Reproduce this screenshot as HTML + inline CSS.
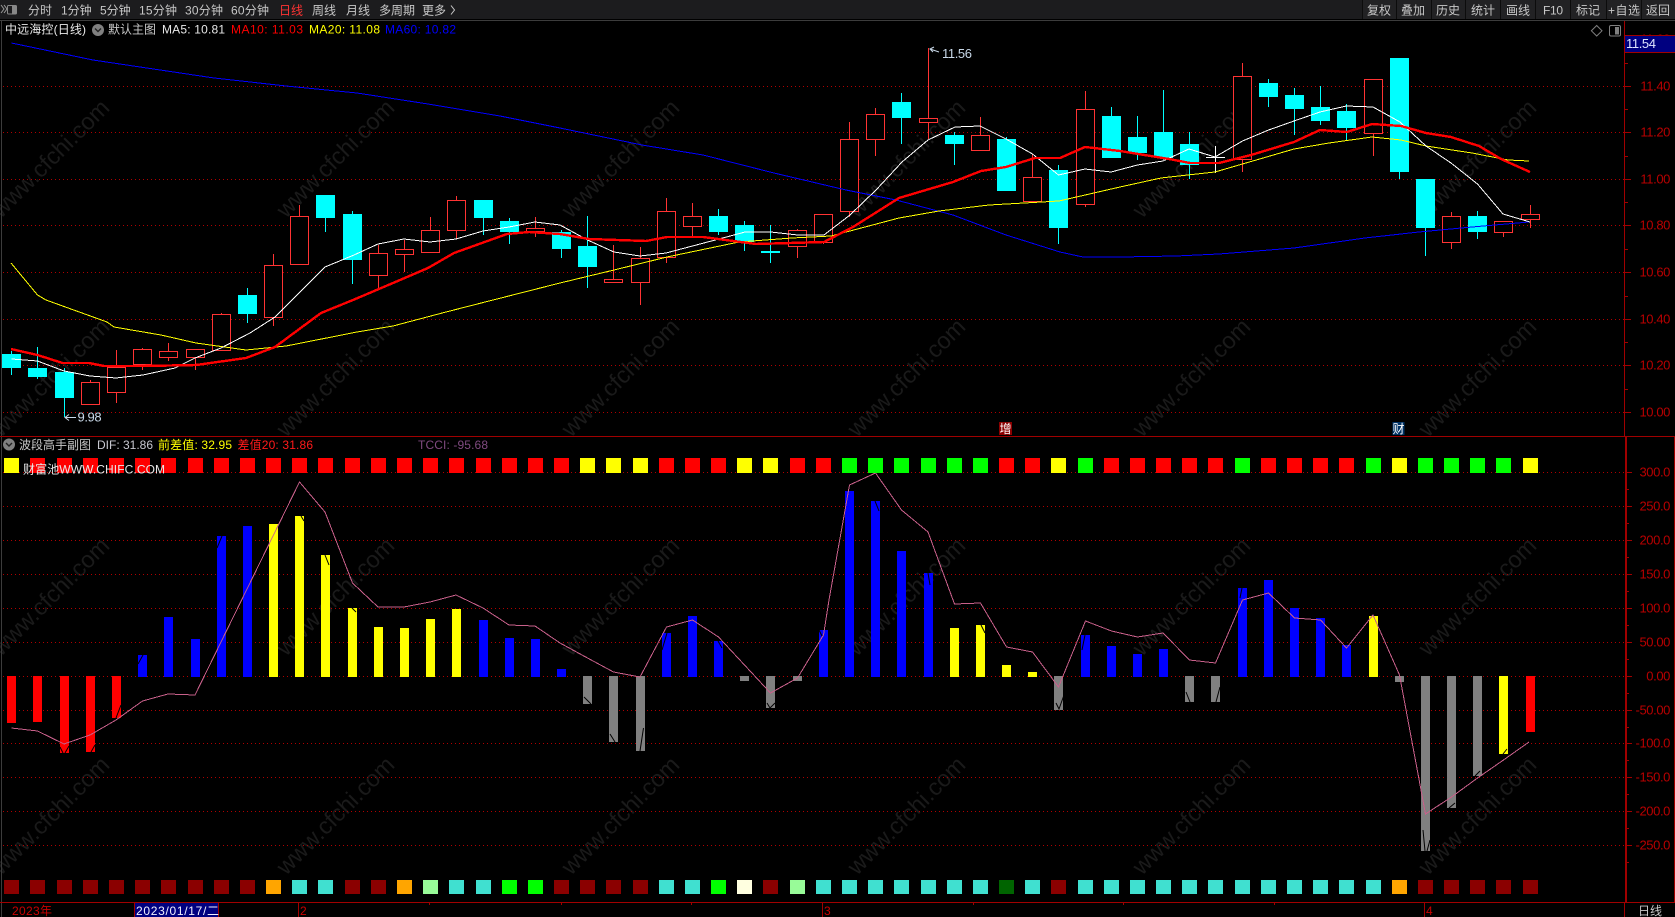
<!DOCTYPE html>
<html lang="zh">
<head>
<meta charset="utf-8">
<title>中远海控 (日线)</title>
<style>
html,body{margin:0;padding:0;background:#000;width:1675px;height:917px;overflow:hidden}
svg{display:block;position:absolute;left:0;top:0}
text{font-family:"Liberation Sans","Noto Sans CJK SC",sans-serif;font-size:12px;white-space:pre}
.wm text{font-size:23.5px;fill:#1a1a1a}
.tb text{fill:#c8c8c8}
.ax text{font-size:13px;fill:#b80000;text-anchor:end;letter-spacing:-.4px}
.grid{stroke:#b00000;stroke-width:1;stroke-dasharray:1 3;fill:none;shape-rendering:crispEdges}
.crisp{shape-rendering:crispEdges}
</style>
</head>
<body>
<svg width="1675" height="917" viewBox="0 0 1675 917" xmlns="http://www.w3.org/2000/svg">
<rect width="1675" height="917" fill="#000"/>

<!-- watermark -->
<g class="wm">
<text x="1" y="219" transform="rotate(-45 1 219)">www.cfchi.com</text>
<text x="286" y="219" transform="rotate(-45 286 219)">www.cfchi.com</text>
<text x="571" y="219" transform="rotate(-45 571 219)">www.cfchi.com</text>
<text x="857" y="219" transform="rotate(-45 857 219)">www.cfchi.com</text>
<text x="1142" y="219" transform="rotate(-45 1142 219)">www.cfchi.com</text>
<text x="1428" y="219" transform="rotate(-45 1428 219)">www.cfchi.com</text>
<text x="1" y="438" transform="rotate(-45 1 438)">www.cfchi.com</text>
<text x="286" y="438" transform="rotate(-45 286 438)">www.cfchi.com</text>
<text x="571" y="438" transform="rotate(-45 571 438)">www.cfchi.com</text>
<text x="857" y="438" transform="rotate(-45 857 438)">www.cfchi.com</text>
<text x="1142" y="438" transform="rotate(-45 1142 438)">www.cfchi.com</text>
<text x="1428" y="438" transform="rotate(-45 1428 438)">www.cfchi.com</text>
<text x="1" y="657" transform="rotate(-45 1 657)">www.cfchi.com</text>
<text x="286" y="657" transform="rotate(-45 286 657)">www.cfchi.com</text>
<text x="571" y="657" transform="rotate(-45 571 657)">www.cfchi.com</text>
<text x="857" y="657" transform="rotate(-45 857 657)">www.cfchi.com</text>
<text x="1142" y="657" transform="rotate(-45 1142 657)">www.cfchi.com</text>
<text x="1428" y="657" transform="rotate(-45 1428 657)">www.cfchi.com</text>
<text x="1" y="876" transform="rotate(-45 1 876)">www.cfchi.com</text>
<text x="286" y="876" transform="rotate(-45 286 876)">www.cfchi.com</text>
<text x="571" y="876" transform="rotate(-45 571 876)">www.cfchi.com</text>
<text x="857" y="876" transform="rotate(-45 857 876)">www.cfchi.com</text>
<text x="1142" y="876" transform="rotate(-45 1142 876)">www.cfchi.com</text>
<text x="1428" y="876" transform="rotate(-45 1428 876)">www.cfchi.com</text>
</g>

<!-- toolbar -->
<g class="tb">
<rect x="0" y="0" width="1675" height="19" fill="#1c1c1e"/>
<rect x="1362" y="0" width="313" height="19" fill="#222224"/>
<rect x="0" y="20" width="1675" height="1" fill="#3c3c3c"/>
<path d="M1362.5 0V19M1396.5 0V19M1431.5 0V19M1465.5 0V19M1500.5 0V19M1535.5 0V19M1570.5 0V19M1606.5 0V19M1641.5 0V19" stroke="#0c0c0c" class="crisp"/>
<path d="M1 5L4 9L1 13M4 5L7 9L4 13" stroke="#999" fill="none"/>
<rect x="7.5" y="5.5" width="9" height="8.5" rx="1" fill="#1c1c1e" stroke="#888"/>
<rect x="12" y="6" width="4" height="7.5" fill="#888"/>
<text x="28" y="14.5">分时</text>
<text x="61" y="14.5">1分钟</text>
<text x="100" y="14.5">5分钟</text>
<text x="139" y="14.5" textLength="38">15分钟</text>
<text x="185" y="14.5" textLength="38">30分钟</text>
<text x="231" y="14.5" textLength="38">60分钟</text>
<text x="279" y="14.5" style="fill:#ff3333">日线</text>
<text x="312" y="14.5">周线</text>
<text x="346" y="14.5">月线</text>
<text x="379" y="14.5">多周期</text>
<text x="422" y="14.5">更多</text>
<path d="M451 5.5L454.5 10L451 14.5" stroke="#c8c8c8" fill="none"/>
<text x="1367" y="14.5">复权</text>
<text x="1401" y="14.5">叠加</text>
<text x="1436" y="14.5">历史</text>
<text x="1471" y="14.5">统计</text>
<text x="1506" y="14.5">画线</text>
<text x="1543" y="14.5" textLength="20">F10</text>
<text x="1576" y="14.5">标记</text>
<text x="1608" y="14.5" textLength="32">+自选</text>
<text x="1646" y="14.5">返回</text>
</g>

<!-- left border -->
<path d="M1.5 21V917" stroke="#3c3c3c" class="crisp"/>

<!-- grid -->
<path class="grid" d="M3 86.5H1625M3 132.5H1625M3 179.5H1625M3 225.5H1625M3 272.5H1625M3 319.5H1625M3 365.5H1625M3 412.5H1625M3 472.5H1625M3 506.5H1625M3 540.5H1625M3 574.5H1625M3 608.5H1625M3 642.5H1625M3 676.5H1625M3 710.5H1625M3 743.5H1625M3 777.5H1625M3 811.5H1625M3 845.5H1625"/>

<!-- candles: cyan -->
<g class="crisp">
<path stroke="#00ffff" fill="none" d="M11.5 351V375M37.5 347V379M64.5 368V417M247.5 288V323M325.5 195V232M352.5 211V284M483.5 200V235M509.5 218V244M561.5 230V258M587.5 216V288M718.5 209V235M744.5 221V251M770.5 225V263M901.5 93V144M954.5 132V165M1006.5 137V191M1058.5 165V244M1111.5 107V158M1137.5 116V160M1163.5 90V160M1189.5 132V179M1268.5 79V107M1294.5 88V135M1320.5 86V125M1346.5 104V141M1399.5 58V179M1425.5 179V256M1477.5 211V239"/>
<path fill="#00ffff" d="M2 354h19v14h-19zM28 368h19v9h-19zM55 372h19v26h-19zM238 295h19v19h-19zM316 195h19v23h-19zM343 214h19v46h-19zM474 200h19v18h-19zM500 221h19v11h-19zM552 232h19v17h-19zM578 246h19v21h-19zM709 216h19v16h-19zM735 225h19v17h-19zM761 251h19v2h-19zM892 102h19v16h-19zM945 135h19v9h-19zM997 139h19v52h-19zM1049 170h19v58h-19zM1102 116h19v42h-19zM1128 137h19v16h-19zM1154 132h19v26h-19zM1180 144h19v21h-19zM1259 83h19v14h-19zM1285 95h19v14h-19zM1311 107h19v14h-19zM1337 111h19v17h-19zM1390 58h19v114h-19zM1416 179h19v49h-19zM1468 216h19v16h-19z"/>
<!-- candles: red -->
<path stroke="#ff3333" fill="none" d="M90.5 380V404M116.5 350V403M142.5 348V370M168.5 343V361M195.5 349V370M221.5 313V351M273.5 254V326M299.5 205V264M378.5 245V288M404.5 240V272M430.5 217V253M456.5 196V239M535.5 217V237M613.5 245V282M640.5 247V305M666.5 198V263M692.5 203V236M797.5 229V258M823.5 214V244M849.5 122V217M875.5 108V156M928.5 48V139M980.5 117V150M1032.5 154V201M1085.5 91V207M1242.5 63V172M1373.5 79V156M1451.5 212V249M1503.5 221V237M1530.5 205V228"/>
<g fill="#000" stroke="#ff3333">
<rect x="81.5" y="382.5" width="18" height="22"/><rect x="107.5" y="367.5" width="18" height="25"/><rect x="133.5" y="349.5" width="18" height="15"/><rect x="159.5" y="351.5" width="18" height="6"/><rect x="186.5" y="349.5" width="18" height="8"/><rect x="212.5" y="314.5" width="18" height="36"/><rect x="264.5" y="265.5" width="18" height="52"/><rect x="290.5" y="216.5" width="18" height="48"/><rect x="369.5" y="253.5" width="18" height="22"/><rect x="395.5" y="249.5" width="18" height="5"/><rect x="421.5" y="230.5" width="18" height="22"/><rect x="447.5" y="200.5" width="18" height="30"/><rect x="526.5" y="228.5" width="18" height="3"/><rect x="604.5" y="279.5" width="18" height="3"/><rect x="631.5" y="258.5" width="18" height="24"/><rect x="657.5" y="211.5" width="18" height="46"/><rect x="683.5" y="216.5" width="18" height="10"/><rect x="788.5" y="230.5" width="18" height="16"/><rect x="814.5" y="214.5" width="18" height="28"/><rect x="840.5" y="139.5" width="18" height="72"/><rect x="866.5" y="114.5" width="18" height="25"/><rect x="919.5" y="118.5" width="18" height="4"/><rect x="971.5" y="135.5" width="18" height="15"/><rect x="1023.5" y="177.5" width="18" height="24"/><rect x="1076.5" y="109.5" width="18" height="95"/><rect x="1233.5" y="76.5" width="18" height="83"/><rect x="1364.5" y="79.5" width="18" height="54"/><rect x="1442.5" y="216.5" width="18" height="26"/><rect x="1494.5" y="221.5" width="18" height="11"/><rect x="1521.5" y="214.5" width="18" height="5"/>
</g>
<path stroke="#ffffff" fill="none" d="M1215.5 146V173M1206 157.5H1225"/>
</g>

<!-- MA lines -->
<polyline class="crisp" fill="none" stroke="#0000ff" stroke-width="1" points="11.4,43 93,60 214,78 286,86 357,93 428,104 500,116 560,128 642,145 703,155 774,173 846,190 896,200 953,215 1006,235 1060,252 1083,257 1120,257 1176,256 1219,254 1294,248 1365,238 1419,232 1472,227 1529,222"/>
<polyline class="crisp" fill="none" stroke="#ffff00" stroke-width="1" points="11,263 37.5,295 46,300 107,322 114,327 161,335 196,343 246,350 286,346 357,332 393,326 446,312 493,300 560,283 614,270 667,257 739,242 792,238 831,236 899,218 939,211 989,205 1059,201 1120,187 1161,178 1215,172 1294,149 1329,143 1372,137 1401,140 1426,146 1472,153 1508,160 1529,161"/>
<polyline class="crisp" fill="none" stroke="#ffffff" stroke-width="1" points="11.5,359 37.5,361 64,371 90,376 116,378 143,375 175,368 195,358 221,348 250,333 275,317 292,300 325,267 354,255 378,244 404,239 430,242 456,239 483,231 509,227 535,222 560,225 587.5,240 614,252 640,256 666,253 692.5,246 719,239 745,232 771,232 797.5,235 824,235 850,215 876,190 902,162 928,140 955,127 980,126 1006,139 1032.5,154 1058.5,175 1085,169 1111,172 1137.5,165 1163,161 1189,149 1215,157 1242.5,141 1268.6,130 1294,121 1320,112 1346.4,106 1373,107 1400,122 1426,146 1451,163 1477.5,184 1503,214 1530,222"/>
<polyline class="crisp" fill="none" stroke="#ff0000" stroke-width="2.4" points="11,349 37.5,355 62.5,363 89,363 104,366 143,366 196,365 246,358 275,347 321,313 353,300 393,283 428,268 454,253 507,234 529,232 560,234 589,239 646,241 667,237 703,237 756,244 824,242 853,227 899,198 953,182 981,171 1006,167 1035,158 1060,158 1085,147 1120,151 1169,159 1190,163 1219,163 1251,155 1294,142 1320,130 1347,132 1372,124 1401,126 1426,133 1451,137 1479,146 1501,159 1530,172"/>

<!-- price markers -->
<path d="M939 52L930 49M934 47L930 49L933 52" stroke="#c8d8e8" fill="none"/>
<text x="942" y="58" style="font-size:13px;fill:#c8d8e8;letter-spacing:-.4px">11.56</text>
<path d="M76 417.5H65M69 414.5L65 417.5L69 420.5" stroke="#c8d8e8" fill="none"/>
<text x="77.5" y="421.5" style="font-size:13px;fill:#c8d8e8;letter-spacing:-.4px">9.98</text>

<!-- badges -->
<rect x="999" y="422" width="13" height="13" fill="#8b0000"/>
<text x="999.5" y="433" style="fill:#fff">增</text>
<rect x="1392.5" y="422" width="12" height="13" fill="#003366"/>
<text x="1392.5" y="433" style="fill:#fff">财</text>

<!-- top info -->
<text x="5" y="33.5" textLength="81" style="fill:#e8e8e8">中远海控(日线)</text>
<circle cx="98" cy="30" r="6" fill="#808080"/>
<path d="M95 28.5L98 31.5L101 28.5" stroke="#222" stroke-width="1.4" fill="none"/>
<text x="108" y="33.5" style="fill:#c8c8c8">默认主图</text>
<text x="162" y="33.5" textLength="63" style="fill:#e8e8e8">MA5: 10.81</text>
<text x="231" y="33.5" textLength="72" style="fill:#ff0000">MA10: 11.03</text>
<text x="309" y="33.5" textLength="71" style="fill:#ffff00">MA20: 11.08</text>
<text x="385" y="33.5" textLength="71" style="fill:#0000ff">MA60: 10.82</text>

<!-- diamond + panel icon -->
<path d="M1596.7 25.5L1602 30.8L1596.7 36L1591.4 30.8Z" stroke="#808080" fill="none"/>
<rect x="1609.5" y="25.5" width="11" height="10.5" rx="1.5" stroke="#808080" fill="none"/>
<rect x="1615" y="27" width="4" height="7.5" fill="#808080"/>

<!-- separators + axis -->
<g class="crisp">
<rect x="0" y="436" width="1675" height="1" fill="#a00000"/>
<rect x="0" y="902" width="1675" height="1" fill="#a00000"/>
<rect x="1624" y="21" width="1" height="415" fill="#a00000"/>
<rect x="1625" y="436" width="2" height="466" fill="#a00000"/>
<rect x="1674" y="436" width="1" height="466" fill="#a00000"/>
<rect x="1624" y="902" width="1" height="15" fill="#a00000"/>
<path stroke="#a00000" fill="none" d="M1625 86.5h6M1625 132.5h6M1625 179.5h6M1625 225.5h6M1625 272.5h6M1625 319.5h6M1625 365.5h6M1625 412.5h6M1627 472.5h5M1627 506.5h5M1627 540.5h5M1627 574.5h5M1627 608.5h5M1627 642.5h5M1627 676.5h5M1627 710.5h5M1627 743.5h5M1627 777.5h5M1627 811.5h5M1627 845.5h5M1625 63.5h3M1625 109.5h3M1625 156.5h3M1625 202.5h3M1625 249.5h3M1625 296.5h3M1625 342.5h3M1625 389.5h3M1627 489.5h2M1627 523.5h2M1627 557.5h2M1627 591.5h2M1627 625.5h2M1627 659.5h2M1627 693.5h2M1627 727.5h2M1627 760.5h2M1627 794.5h2M1627 828.5h2M1627 862.5h2"/>
</g>
<g class="ax">
<text x="1670" y="43.5">11.60</text>
<text x="1670" y="90.5">11.40</text>
<text x="1670" y="136.5">11.20</text>
<text x="1670" y="183.5">11.00</text>
<text x="1670" y="229.5">10.80</text>
<text x="1670" y="276.5">10.60</text>
<text x="1670" y="323.5">10.40</text>
<text x="1670" y="369.5">10.20</text>
<text x="1670" y="416.5">10.00</text>
<text x="1670" y="476.5">300.0</text>
<text x="1670" y="510.5">250.0</text>
<text x="1670" y="544.5">200.0</text>
<text x="1670" y="578.5">150.0</text>
<text x="1670" y="612.5">100.0</text>
<text x="1670" y="646.5">50.00</text>
<text x="1670" y="680.5">0.00</text>
<text x="1670" y="714.5">-50.00</text>
<text x="1670" y="747.5">-100.0</text>
<text x="1670" y="781.5">-150.0</text>
<text x="1670" y="815.5">-200.0</text>
<text x="1670" y="849.5">-250.0</text>
</g>
<rect x="1625" y="35" width="50" height="17" fill="#000080" class="crisp"/>
<path d="M1625 35.5H1675M1625 52.5H1675" stroke="#a00000" class="crisp"/>
<text x="1626" y="48" style="font-size:13px;fill:#dfe4ff;letter-spacing:-.4px">11.54</text>

<!-- lower header -->
<circle cx="9" cy="444.5" r="6" fill="#808080"/>
<path d="M6 443L9 446L12 443" stroke="#222" stroke-width="1.4" fill="none"/>
<text x="19" y="449" style="fill:#c8c8c8">波段高手副图</text>
<text x="97" y="449" textLength="56" style="fill:#c8c8d0">DIF: 31.86</text>
<text x="158" y="449" textLength="74" style="fill:#ffff00">前差值: 32.95</text>
<text x="237.5" y="449" textLength="75.5" style="fill:#ff1a1a">差值20: 31.86</text>
<text x="418" y="449" textLength="70" style="fill:#804a80">TCCI: -95.68</text>

<!-- histogram bars -->
<g fill="none" stroke-width="9" class="crisp">
<path stroke="#ff0000" d="M11.5 676V723M37.5 676V722M64.5 676V753M90.5 676V752M116.5 676V718M1530.5 676V732"/>
<path stroke="#0000ff" d="M142.5 655V677M168.5 617V677M195.5 639V677M221.5 536V677M247.5 526V677M483.5 620V677M509.5 638V677M535.5 639V677M561.5 669V677M666.5 633V677M692.5 616V677M718.5 641V677M823.5 630V677M849.5 491V677M875.5 501V677M901.5 551V677M928.5 573V677M1085.5 635V677M1111.5 646V677M1137.5 654V677M1163.5 649V677M1242.5 588V677M1268.5 580V677M1294.5 608V677M1320.5 618V677M1346.5 645V677"/>
<path stroke="#ffff00" d="M273.5 524V677M299.5 516V677M325.5 555V677M352.5 608V677M378.5 627V677M404.5 628V677M430.5 619V677M456.5 609V677M954.5 628V677M980.5 625V677M1006.5 665V677M1032.5 672V677M1373.5 616V677M1503.5 676V754"/>
<path stroke="#808080" d="M587.5 676V704M613.5 676V742M640.5 676V751M744.5 676V681M770.5 676V708M797.5 676V681M1058.5 676V710M1189.5 676V702M1215.5 676V702M1399.5 676V682M1425.5 676V851M1451.5 676V808M1477.5 676V776"/>
</g>
<!-- notches at bar ends -->
<path stroke="#000" fill="none" d="M1423 830L1425 851M1430 840L1427 851M643.5 728L640 751M767 703L770 708L775 703M1056 703L1059 709L1064 695M610 734L615 742M584 697L591 704M1186 692L1190 702M1220 687L1216 702M1455 803L1449 808M1480 771L1475 776M1507 749L1503 754M121 705L116 718M60 747L63 753M69 746L65 753M95 745L91 752M138 664L143 655M217 548L222 536M301 516L304 521M325 555L329 565M352 608L356 612M1242 588L1240 598M981 625L985 633M928 573L930 585M875 501L879 511M662 650L667 633M718 641L722 648M819 630L822 636M1085 635L1082 650"/>

<!-- pink line -->
<polyline class="crisp" fill="none" stroke="#c8608a" stroke-width="1" points="11.5,728 37.5,731 64,744 90,735 116,720 142.5,701 168,694 195,695 299.5,482 325,512 352.5,583 378,607 404,607 430,602 456,595 483,608 509,625 535,626 560,643 587.5,658 613.5,672 640,677 666.5,627 692.5,620 718.5,637 744.5,665 770.5,693 797.5,678 823.5,635 829,600 849.5,485 875.5,473 901.5,510 928,532 954.5,604 980.5,603 1006.5,647 1032.5,652 1058.5,687 1085.5,621 1111.5,631 1137.5,637 1163,633 1189.5,660 1215.5,663 1242.5,600 1268.5,593 1294.5,618 1320.5,620 1346.5,648 1373,615 1399.5,675 1425.5,814 1451.5,797 1477.5,778 1503.5,760 1529,742"/>

<!-- square rows -->
<g fill="none" class="crisp">
<g stroke-width="15">
<path stroke="#ffff00" d="M4 465.5h15M580 465.5h15M606 465.5h15M633 465.5h15M737 465.5h15M763 465.5h15M1051 465.5h15M1392 465.5h15M1523 465.5h15"/>
<path stroke="#00ff00" d="M842 465.5h15M868 465.5h15M894 465.5h15M921 465.5h15M947 465.5h15M973 465.5h15M1078 465.5h15M1235 465.5h15M1366 465.5h15M1418 465.5h15M1444 465.5h15M1470 465.5h15M1496 465.5h15"/>
<path stroke="#ff0000" d="M30 465.5h15M57 465.5h15M83 465.5h15M109 465.5h15M135 465.5h15M161 465.5h15M188 465.5h15M214 465.5h15M240 465.5h15M266 465.5h15M292 465.5h15M318 465.5h15M345 465.5h15M371 465.5h15M397 465.5h15M423 465.5h15M449 465.5h15M476 465.5h15M502 465.5h15M528 465.5h15M554 465.5h15M659 465.5h15M685 465.5h15M711 465.5h15M790 465.5h15M816 465.5h15M999 465.5h15M1025 465.5h15M1104 465.5h15M1130 465.5h15M1156 465.5h15M1182 465.5h15M1208 465.5h15M1261 465.5h15M1287 465.5h15M1313 465.5h15M1339 465.5h15"/>
</g>
<g stroke-width="14">
<path stroke="#8b0000" d="M4 887h15M30 887h15M57 887h15M83 887h15M109 887h15M135 887h15M161 887h15M188 887h15M214 887h15M240 887h15M345 887h15M371 887h15M554 887h15M580 887h15M606 887h15M633 887h15M763 887h15M1051 887h15M1418 887h15M1444 887h15M1470 887h15M1496 887h15M1523 887h15"/>
<path stroke="#ffa500" d="M266 887h15M397 887h15M1392 887h15"/>
<path stroke="#40e0d0" d="M292 887h15M318 887h15M449 887h15M476 887h15M659 887h15M685 887h15M816 887h15M842 887h15M868 887h15M894 887h15M921 887h15M947 887h15M973 887h15M1025 887h15M1078 887h15M1104 887h15M1130 887h15M1156 887h15M1182 887h15M1208 887h15M1235 887h15M1261 887h15M1287 887h15M1313 887h15M1339 887h15M1366 887h15"/>
<path stroke="#98fb98" d="M423 887h15M790 887h15"/>
<path stroke="#00ff00" d="M502 887h15M528 887h15M711 887h15"/>
<path stroke="#ffffe0" d="M737 887h15"/>
<path stroke="#006400" d="M999 887h15"/>
</g>
</g>

<text x="23" y="473.5" textLength="142" style="fill:#e8e8e8">财富池WWW.CHIFC.COM</text>

<!-- bottom axis -->
<g class="crisp">
<rect x="135" y="903" width="84" height="14" fill="#000080"/>
<path stroke="#a00000" fill="none" d="M134.5 903V917M218.5 903V917M298.5 903V917M822.5 903V917M1424.5 903V917M429.5 903V905M561.5 903V905M691.5 903V905M973.5 903V905M1123.5 903V905M1274.5 903V905"/>
</g>
<text x="12" y="915" textLength="40" style="fill:#c80000">2023年</text>
<text x="136" y="915" textLength="83" style="fill:#f0f0ff">2023/01/17/二</text>
<text x="300" y="915" style="fill:#c80000">2</text>
<text x="824" y="915" style="fill:#c80000">3</text>
<text x="1426" y="915" style="fill:#c80000">4</text>
<text x="1638" y="915" style="fill:#c8c8c8">日线</text>
</svg>
</body>
</html>
